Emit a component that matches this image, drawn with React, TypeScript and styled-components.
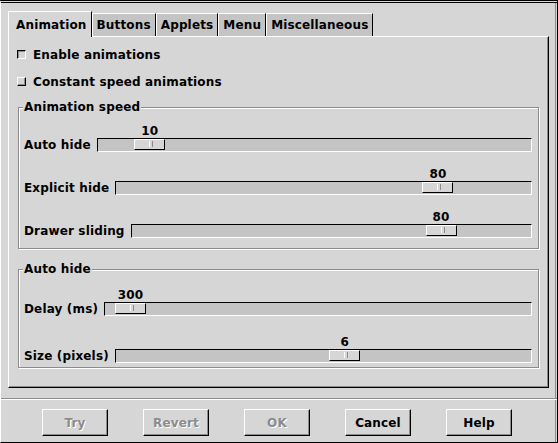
import React from "react";
import styled, { createGlobalStyle } from "styled-components";

const BG = "#d6d6d6";
const DARK = "#c4c4c4";
const SHADE = "#8c8c8c";

const Global = createGlobalStyle`
  html, body { margin: 0; padding: 0; background: ${BG}; }
  body {
    font-family: "DejaVu Sans", "Liberation Sans", sans-serif;
    font-weight: bold;
    font-size: 12px;
    letter-spacing: 0.15px;
    color: #000;
  }
  * { box-sizing: border-box; }
`;

const Window = styled.div`
  width: 558px;
  height: 443px;
  background: ${BG};
  border-top: 3px double #000;
  border-left: 1px solid #fff;
  border-right: 1px solid #000;
  border-bottom: 1px solid #000;
  box-shadow: inset -1px 0 0 ${BG}, inset -2px 0 0 ${SHADE};
  display: flex;
  flex-direction: column;
  padding-top: 8px;
`;

const Notebook = styled.div`
  margin: 0 8px 0 7px;
  display: flex;
  flex-direction: column;
`;

const TabBar = styled.div`
  display: flex;
  align-items: flex-end;
  height: 25px;
`;

const Tab = styled.div<{ $active?: boolean }>`
  position: relative;
  z-index: ${(p) => (p.$active ? 1 : 0)};
  height: ${(p) => (p.$active ? "26px" : "23px")};
  margin-bottom: ${(p) => (p.$active ? "-1px" : "0")};
  padding: ${(p) => (p.$active ? "6px 4px 0 7px" : "4px 4px 0 4px")};
  line-height: 14px;
  background: ${(p) => (p.$active ? BG : DARK)};
  border-top: 1px solid #fff;
  border-left: 1px solid #fff;
  border-right: 1px solid #000;
  white-space: nowrap;
`;

const Panel = styled.div`
  height: 352px;
  border-top: 1px solid #fff;
  border-left: 1px solid #fff;
  border-right: 1px solid #000;
  border-bottom: 1px solid #000;
  box-shadow: inset -1px -1px 0 ${SHADE};
  padding: 4px 9px 0 8px;
  display: flex;
  flex-direction: column;
`;

const CheckRow = styled.div`
  display: flex;
  align-items: center;
  height: 27px;
`;

const CheckBox = styled.span<{ $sunken?: boolean }>`
  display: inline-block;
  width: 9px;
  height: 9px;
  margin-right: 7px;
  background: ${BG};
  border-style: solid;
  border-width: 1px;
  border-color: ${(p) =>
    p.$sunken ? `#000 #fff #fff #000` : `#fff #000 #000 #fff`};
  box-shadow: ${(p) =>
    p.$sunken ? `inset 1px 1px 0 ${SHADE}` : `inset -1px -1px 0 ${SHADE}`};
`;

const Frame = styled.div<{ $top: number; $pad: string; $gap: number }>`
  position: relative;
  margin: ${(p) => p.$top}px 0 0 1px;
  border: 1px solid ${SHADE};
  box-shadow: inset 1px 1px 0 #fff, 1px 1px 0 #fff;
  padding: ${(p) => p.$pad};
  display: flex;
  flex-direction: column;
  gap: ${(p) => p.$gap}px;
`;

const Legend = styled.span`
  position: absolute;
  top: -8px;
  left: 4px;
  padding: 0 1px;
  line-height: 14px;
  background: ${BG};
`;

const SliderRow = styled.div`
  display: flex;
  align-items: flex-end;
  height: 43px;
`;

const RowLabel = styled.span`
  line-height: 14px;
  height: 14px;
  margin-right: 6px;
  white-space: nowrap;
`;

const Scale = styled.div`
  flex: 1;
  display: flex;
  flex-direction: column;
`;

const ValueArea = styled.div`
  position: relative;
  height: 15px;
`;

const Value = styled.span`
  position: absolute;
  bottom: 0;
  line-height: 14px;
  transform: translateX(-50%);
`;

const Trough = styled.div`
  position: relative;
  height: 14px;
  background: ${DARK};
  border-top: 1px solid #000;
  border-left: 1px solid #000;
  border-bottom: 1px solid #fff;
  border-right: 1px solid #fff;
`;

const Thumb = styled.div`
  position: absolute;
  top: 0;
  width: 31px;
  height: 11px;
  background: ${BG};
  border-top: 1px solid #fff;
  border-left: 1px solid #fff;
  border-right: 1px solid #000;
  border-bottom: 1px solid #000;
  &::after {
    content: "";
    position: absolute;
    left: 14px;
    top: 1px;
    width: 2px;
    height: 6px;
    border-left: 1px solid #fff;
    border-right: 1px solid ${SHADE};
  }
`;

const Separator = styled.div`
  margin-top: 10px;
  height: 2px;
  border-top: 1px solid ${SHADE};
  border-bottom: 1px solid #fff;
`;

const ButtonRow = styled.div`
  display: flex;
  gap: 35px;
  padding: 9px 0 0 41px;
`;

const Button = styled.div<{ $disabled?: boolean }>`
  width: 66px;
  height: 27px;
  display: flex;
  align-items: center;
  justify-content: center;
  border-top: 1px solid #fff;
  border-left: 1px solid #fff;
  border-right: 1px solid #000;
  border-bottom: 1px solid #000;
  box-shadow: inset -1px -1px 0 ${SHADE};
  color: ${(p) => (p.$disabled ? SHADE : "#000")};
  text-shadow: ${(p) => (p.$disabled ? "1px 1px 0 #fff" : "none")};
`;

type SliderProps = { label: string; value: number; min: number; max: number };

function Slider({ label, value, min, max }: SliderProps) {
  const frac = (value - min) / (max - min);
  const pos = `calc((100% - 31px) * ${frac.toFixed(5)})`;
  return (
    <SliderRow>
      <RowLabel>{label}</RowLabel>
      <Scale>
        <ValueArea>
          <Value
            style={{ left: `calc((100% - 33px) * ${frac.toFixed(5)} + 16.5px)` }}
          >
            {value}
          </Value>
        </ValueArea>
        <Trough>
          <Thumb style={{ left: pos }} />
        </Trough>
      </Scale>
    </SliderRow>
  );
}

export default function App() {
  const tabs = ["Animation", "Buttons", "Applets", "Menu", "Miscellaneous"];
  return (
    <>
      <Global />
      <Window>
        <Notebook>
          <TabBar>
            {tabs.map((t, i) => (
              <Tab key={t} $active={i === 0}>
                {t}
              </Tab>
            ))}
          </TabBar>
          <Panel>
            <CheckRow>
              <CheckBox $sunken />
              Enable animations
            </CheckRow>
            <CheckRow>
              <CheckBox />
              Constant speed animations
            </CheckRow>
            <Frame $top={12} $pad="1px 6px 10px 5px" $gap={0}>
              <Legend>Animation speed</Legend>
              <Slider label="Auto hide" value={10} min={1} max={100} />
              <Slider label="Explicit hide" value={80} min={1} max={100} />
              <Slider label="Drawer sliding" value={80} min={1} max={100} />
            </Frame>
            <Frame $top={20} $pad="3px 6px 4px 5px" $gap={4}>
              <Legend>Auto hide</Legend>
              <Slider label="Delay (ms)" value={300} min={50} max={10000} />
              <Slider label="Size (pixels)" value={6} min={1} max={10} />
            </Frame>
          </Panel>
        </Notebook>
        <Separator />
        <ButtonRow>
          <Button $disabled>Try</Button>
          <Button $disabled>Revert</Button>
          <Button $disabled>OK</Button>
          <Button>Cancel</Button>
          <Button>Help</Button>
        </ButtonRow>
      </Window>
    </>
  );
}
